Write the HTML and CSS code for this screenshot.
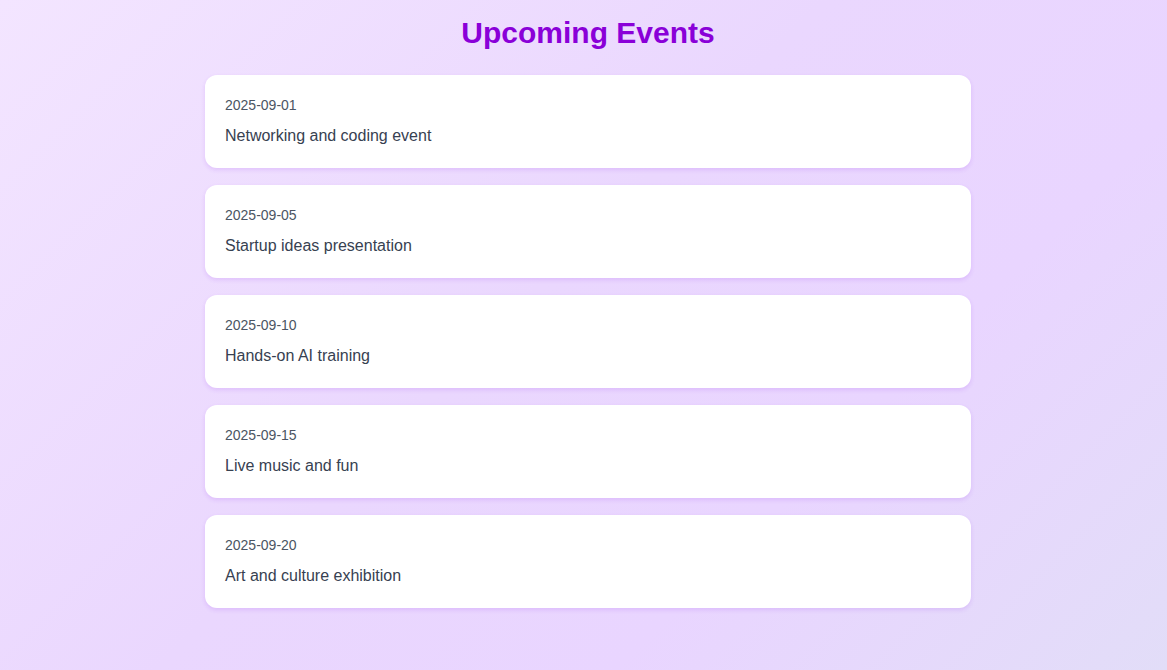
FILE: index.html
```html
<!DOCTYPE html>
<html lang="en">
<head>
<meta charset="utf-8">
<title>Upcoming Events</title>
<link rel="stylesheet" href="styles.css">
</head>
<body>
<main class="page">
  <h1 class="title">Upcoming Events</h1>
  <ul class="events">
    <li class="event"><div class="event-date">2025-09-01</div><div class="event-desc">Networking and coding event</div></li>
    <li class="event"><div class="event-date">2025-09-05</div><div class="event-desc">Startup ideas presentation</div></li>
    <li class="event"><div class="event-date">2025-09-10</div><div class="event-desc">Hands-on AI training</div></li>
    <li class="event"><div class="event-date">2025-09-15</div><div class="event-desc">Live music and fun</div></li>
    <li class="event"><div class="event-date">2025-09-20</div><div class="event-desc">Art and culture exhibition</div></li>
  </ul>
</main>
</body>
</html>
```
FILE: styles.css
```css
html, body {
  margin: 0;
  padding: 0;
  height: 100%;
}
body {
  font-family: "Liberation Sans", Arial, sans-serif;
  background: linear-gradient(135deg, #f3e5ff 0%, #ead7fe 45%, #e9d5ff 70%, #e2ddf8 100%);
  background-attachment: fixed;
  padding-left: 9px;
  box-sizing: border-box;
}
.page {
  max-width: 766px;
  margin: 0 auto;
  padding-top: 15px;
}
.title {
  margin: 0 0 24px;
  font-size: 30px;
  line-height: 36px;
  font-weight: bold;
  text-align: center;
  color: #8a00d8;
}
.events {
  list-style: none;
  margin: 0;
  padding: 0;
  display: flex;
  flex-direction: column;
  gap: 17px;
}
.event {
  background: #ffffff;
  border-radius: 12px;
  padding: 20px;
  box-shadow: 0 2px 4px rgba(147, 51, 234, 0.16);
}
.event-date {
  font-size: 14px;
  line-height: 20px;
  color: #4b5563;
  margin-bottom: 9px;
}
.event-desc {
  font-size: 16px;
  line-height: 24px;
  color: #374151;
}
```
